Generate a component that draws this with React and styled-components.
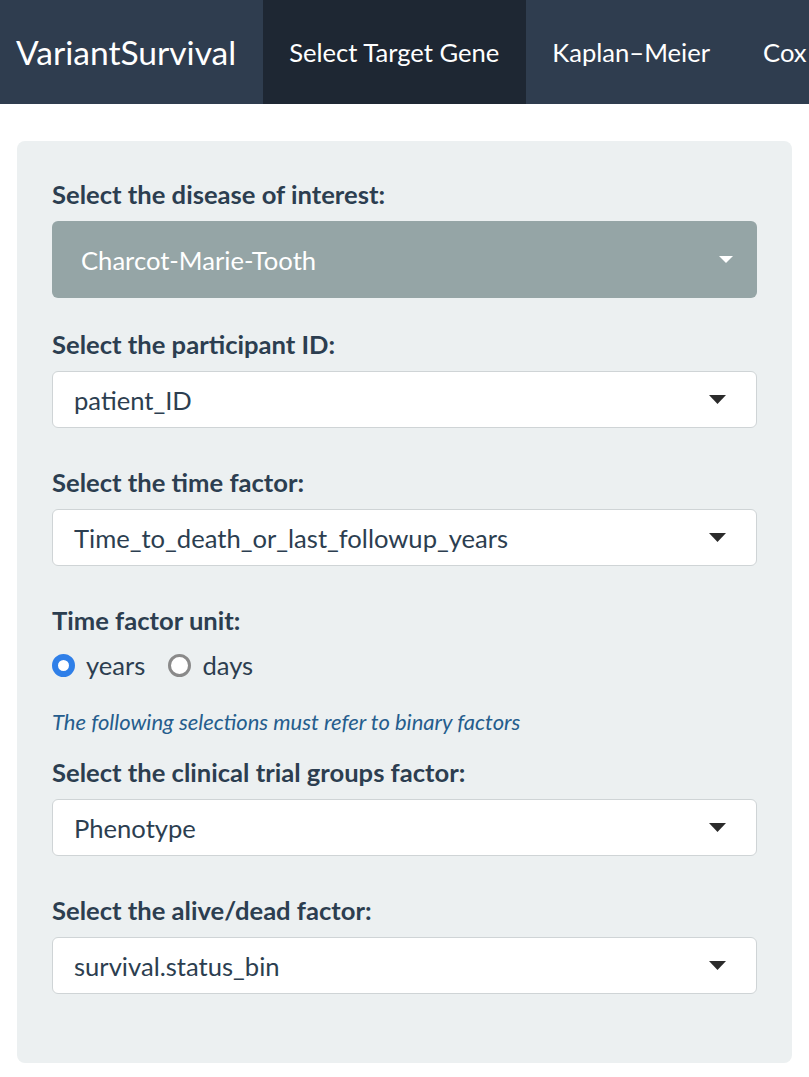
import React from "react";
import styled, { createGlobalStyle } from "styled-components";

const GlobalStyle = createGlobalStyle`
  html, body {
    margin: 0;
    padding: 0;
    background: #ffffff;
    font-family: Lato, "Open Sans", "Liberation Sans", sans-serif;
    color: #2c3e50;
  }
  * { box-sizing: border-box; }
`;

const fields = [
  { label: "Select the participant ID:", value: "patient_ID" },
  { label: "Select the time factor:", value: "Time_to_death_or_last_followup_years" },
];

const binaryFields = [
  { label: "Select the clinical trial groups factor:", value: "Phenotype" },
  { label: "Select the alive/dead factor:", value: "survival.status_bin" },
];

const Caret = ({ light }) =>
  light ? (
    <CaretIcon width="14" height="7" viewBox="0 0 14 7" aria-hidden="true">
      <path d="M0 0 L14 0 L7 7 Z" fill="#ffffff" />
    </CaretIcon>
  ) : (
    <CaretIcon width="17" height="9" viewBox="0 0 17 9" aria-hidden="true">
      <path d="M0 0 L17 0 L8.5 9 Z" fill="#2b2b2b" />
    </CaretIcon>
  );

const App = () => {
  return (
    <Page>
      <GlobalStyle />
      <Navbar>
        <Brand>VariantSurvival</Brand>
        <NavItem active>Select Target Gene</NavItem>
        <NavItem>Kaplan–Meier</NavItem>
        <NavItem>Cox</NavItem>
      </Navbar>

      <Main>
        <Panel>
          <FormGroup gap="0">
            <Label>Select the disease of interest:</Label>
            <DiseaseSelect>
              <span>Charcot-Marie-Tooth</span>
              <Caret light />
            </DiseaseSelect>
          </FormGroup>

          {fields.map((f, i) => (
            <FormGroup key={f.label} gap={i === 0 ? "28px" : "36px"}>
              <Label>{f.label}</Label>
              <Select>
                <span>{f.value}</span>
                <Caret />
              </Select>
            </FormGroup>
          ))}

          <FormGroup gap="36px">
            <Label>Time factor unit:</Label>
            <RadioRow>
              <RadioOption>
                <Radio checked />
                years
              </RadioOption>
              <RadioOption>
                <Radio />
                days
              </RadioOption>
            </RadioRow>
          </FormGroup>

          <Note>The following selections must refer to binary factors</Note>

          {binaryFields.map((f, i) => (
            <FormGroup key={f.label} gap={i === 0 ? "17px" : "36px"}>
              <Label>{f.label}</Label>
              <Select>
                <span>{f.value}</span>
                <Caret />
              </Select>
            </FormGroup>
          ))}
        </Panel>
      </Main>
    </Page>
  );
};

export default App;

const Page = styled.div`
  width: 809px;
  min-height: 1077px;
  overflow: hidden;
`;

const Navbar = styled.nav`
  display: flex;
  align-items: stretch;
  height: 104px;
  background: #2f3d4f;
  white-space: nowrap;
`;

const Brand = styled.div`
  display: flex;
  align-items: center;
  padding: 0 27px 0 16px;
  font-size: 33.6px;
  color: #ffffff;
`;

const NavItem = styled.div`
  display: flex;
  align-items: center;
  padding: 0 27px 0 26px;
  font-size: 25.6px;
  color: #ffffff;
  background: ${(p) => (p.active ? "#1e2733" : "transparent")};
`;

const Main = styled.div`
  padding: 37px 17px 13px 17px;
`;

const Panel = styled.div`
  background: #ecf0f1;
  border-radius: 8px;
  padding: 35px 35px 69px 35px;
`;

const FormGroup = styled.div`
  margin-top: ${(p) => p.gap};
`;

const Label = styled.div`
  font-size: 25.6px;
  font-weight: 700;
  line-height: 36px;
  margin-bottom: 9px;
  color: #2c3e50;
`;

const DiseaseSelect = styled.div`
  display: flex;
  align-items: center;
  justify-content: space-between;
  height: 77px;
  padding: 0 24px 0 29px;
  background: #95a5a6;
  border-radius: 6px;
  font-size: 25.6px;
  color: #ffffff;
`;

const Select = styled.div`
  display: flex;
  align-items: center;
  justify-content: space-between;
  height: 57px;
  padding: 0 30px 0 21px;
  background: #ffffff;
  border: 1px solid #cfd4d6;
  border-radius: 6px;
  font-size: 25.6px;
  color: #2c3e50;
`;

const CaretIcon = styled.svg`
  flex-shrink: 0;
  display: block;
`;

const RadioRow = styled.div`
  display: flex;
  align-items: center;
  gap: 23px;
  height: 36px;
  margin-top: 7px;
`;

const RadioOption = styled.label`
  display: flex;
  align-items: center;
  gap: 11px;
  font-size: 25.6px;
  color: #2c3e50;
`;

const Radio = styled.span`
  width: 23px;
  height: 23px;
  border-radius: 50%;
  background: #ffffff;
  border: ${(p) => (p.checked ? "6px solid #2f7fe8" : "3px solid #8a8a8a")};
`;

const Note = styled.div`
  margin-top: 24px;
  font-size: 22px;
  font-style: italic;
  line-height: 30px;
  color: #255d8d;
`;
